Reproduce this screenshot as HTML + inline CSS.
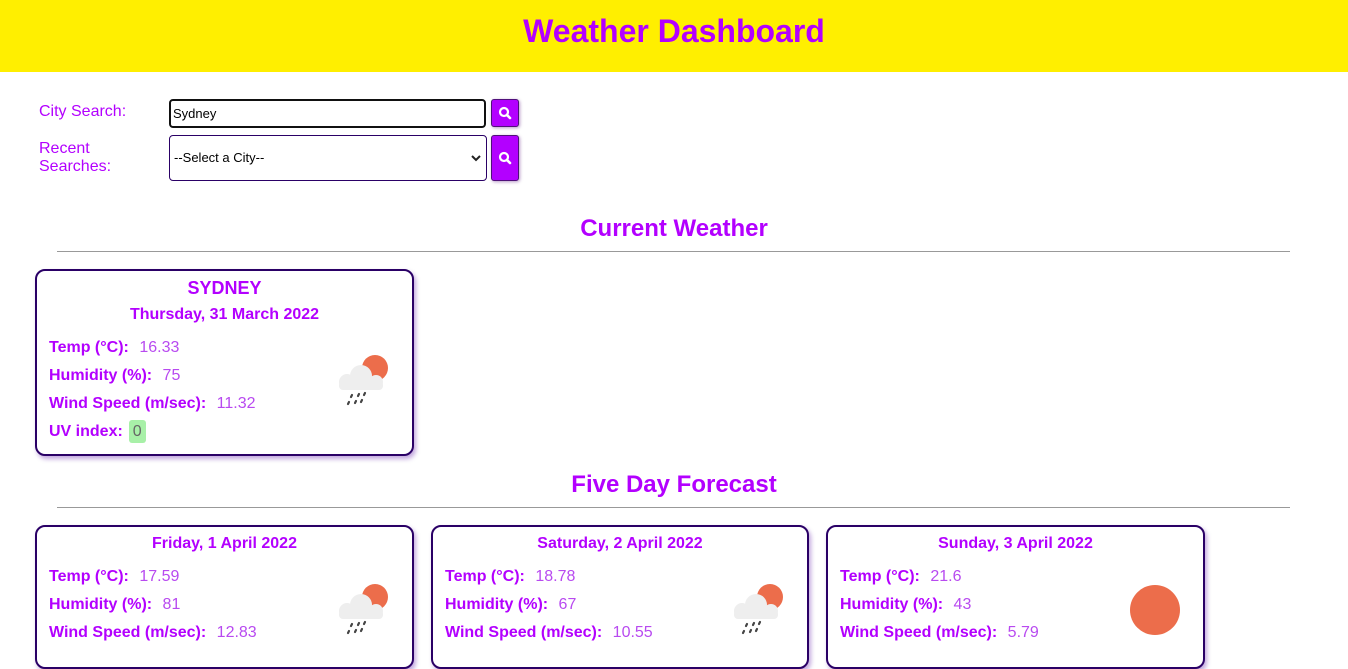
<!DOCTYPE html>
<html><head><style>
body{margin:0;font-family:"Liberation Sans",Arial,sans-serif;background:#fff;width:1348px;height:641px;overflow:hidden;position:relative}
.hdr{position:absolute;left:0;top:0;width:1348px;height:72px;background:#ffef00;text-align:center}
.hdr h1{margin:0;line-height:62px;font-size:32px;color:#b300ff;font-weight:bold}
.lbl{position:absolute;color:#b300ff;font-size:16px;line-height:18px}
.inp{position:absolute;left:169px;top:99px;width:311px;height:25px;border:2px solid #111;border-radius:4px;font-size:13px;line-height:25px;padding-left:2px}
.sel{position:absolute;left:169px;top:135px;width:312px;height:44px;border:1px solid #2a0066;border-radius:4px;font-size:13px;line-height:44px;padding-left:4px}
.btn{position:absolute;left:491px;width:26px;background:#b300ff;border:1px solid #50107a;border-radius:3px;box-shadow:1px 1px 3px rgba(80,0,120,.4)}
.h2{position:absolute;left:0;width:1348px;text-align:center;color:#b300ff;font-size:24px;font-weight:bold}
.hr{position:absolute;left:57px;width:1233px;height:1px;background:#999}
.card{position:absolute;border:2px solid #2a0066;border-radius:10px;box-shadow:2px 3px 5px rgba(80,0,160,.35);background:#fff;color:#b300ff}
.row{position:absolute;left:12px;font-size:16px;color:#b84af0}
.row b{margin-right:6px;color:#b300ff}
.ctr{position:absolute;left:0;right:0;text-align:center;font-weight:bold}
</style></head><body>
<div class="hdr"><h1>Weather Dashboard</h1></div>
<div class="lbl" style="left:39px;top:103px">City Search:</div>
<div class="lbl" style="left:39px;top:140px">Recent<br>Searches:</div>
<div class="inp">Sydney</div>
<div class="sel">--Select a City--<svg style="position:absolute;right:5px;top:19px" width="10" height="7"><path d="M1 1l4 4l4-4" fill="none" stroke="#222" stroke-width="2"/></svg></div>
<div class="btn" style="top:99px;height:26px"><svg width="26" height="26"><circle cx="12" cy="12" r="4" fill="none" stroke="#fff" stroke-width="2.2"/><line x1="15" y1="15" x2="18" y2="18" stroke="#fff" stroke-width="2.6" stroke-linecap="round"/></svg></div>
<div class="btn" style="top:135px;height:44px"><svg width="26" height="44"><circle cx="12" cy="21" r="4" fill="none" stroke="#fff" stroke-width="2.2"/><line x1="15" y1="24" x2="18" y2="27" stroke="#fff" stroke-width="2.6" stroke-linecap="round"/></svg></div>

<div class="h2" style="top:215px">Current Weather</div>
<div class="hr" style="top:251px"></div>
<div class="card" style="left:35px;top:269px;width:375px;height:183px">
<div class="ctr" style="top:7px;font-size:18px">SYDNEY</div>
<div class="ctr" style="top:35px;font-size:16px">Thursday, 31 March 2022</div>
<div class="row" style="top:68px"><b>Temp (°C):</b> 16.33</div>
<div class="row" style="top:96px"><b>Humidity (%):</b> 75</div>
<div class="row" style="top:124px"><b>Wind Speed (m/sec):</b> 11.32</div>
<div class="row" style="top:152px"><b>UV index:</b><span style="background:#a8f0a8;color:#666;padding:3px 4px;border-radius:3px">0</span></div>
<svg style="position:absolute;left:297px;top:80px" width="60" height="60"><circle cx="41" cy="17" r="13" fill="#ec6d4b"/><g fill="#eee"><circle cx="27" cy="25" r="11"/><circle cx="13" cy="31" r="8"/><circle cx="42" cy="31" r="7"/><rect x="5" y="30" width="44" height="9" rx="4"/></g><g stroke="#444" stroke-width="2.2" stroke-linecap="round"><path d="M18 44l-1 2M25 43l-1 2M31 42l-1 2M15 51l-1 2M22 50l-1 2M28 49l-1 2"/></g></svg>
</div>

<div class="h2" style="top:471px">Five Day Forecast</div>
<div class="hr" style="top:507px"></div>

<div class="card" style="left:35px;top:525px;width:375px;height:140px">
<div class="ctr" style="top:8px;font-size:16px">Friday, 1 April 2022</div>
<div class="row" style="top:41px"><b>Temp (°C):</b> 17.59</div>
<div class="row" style="top:69px"><b>Humidity (%):</b> 81</div>
<div class="row" style="top:97px"><b>Wind Speed (m/sec):</b> 12.83</div>
<svg style="position:absolute;left:297px;top:53px" width="60" height="60"><circle cx="41" cy="17" r="13" fill="#ec6d4b"/><g fill="#eee"><circle cx="27" cy="25" r="11"/><circle cx="13" cy="31" r="8"/><circle cx="42" cy="31" r="7"/><rect x="5" y="30" width="44" height="9" rx="4"/></g><g stroke="#444" stroke-width="2.2" stroke-linecap="round"><path d="M18 44l-1 2M25 43l-1 2M31 42l-1 2M15 51l-1 2M22 50l-1 2M28 49l-1 2"/></g></svg>
</div>
<div class="card" style="left:431px;top:525px;width:374px;height:140px">
<div class="ctr" style="top:8px;font-size:16px">Saturday, 2 April 2022</div>
<div class="row" style="top:41px"><b>Temp (°C):</b> 18.78</div>
<div class="row" style="top:69px"><b>Humidity (%):</b> 67</div>
<div class="row" style="top:97px"><b>Wind Speed (m/sec):</b> 10.55</div>
<svg style="position:absolute;left:296px;top:53px" width="60" height="60"><circle cx="41" cy="17" r="13" fill="#ec6d4b"/><g fill="#eee"><circle cx="27" cy="25" r="11"/><circle cx="13" cy="31" r="8"/><circle cx="42" cy="31" r="7"/><rect x="5" y="30" width="44" height="9" rx="4"/></g><g stroke="#444" stroke-width="2.2" stroke-linecap="round"><path d="M18 44l-1 2M25 43l-1 2M31 42l-1 2M15 51l-1 2M22 50l-1 2M28 49l-1 2"/></g></svg>
</div>
<div class="card" style="left:826px;top:525px;width:375px;height:140px">
<div class="ctr" style="top:8px;font-size:16px">Sunday, 3 April 2022</div>
<div class="row" style="top:41px"><b>Temp (°C):</b> 21.6</div>
<div class="row" style="top:69px"><b>Humidity (%):</b> 43</div>
<div class="row" style="top:97px"><b>Wind Speed (m/sec):</b> 5.79</div>
<div style="position:absolute;left:302px;top:58px;width:50px;height:50px;border-radius:50%;background:#ec6d4b"></div>
</div>
</body></html>
